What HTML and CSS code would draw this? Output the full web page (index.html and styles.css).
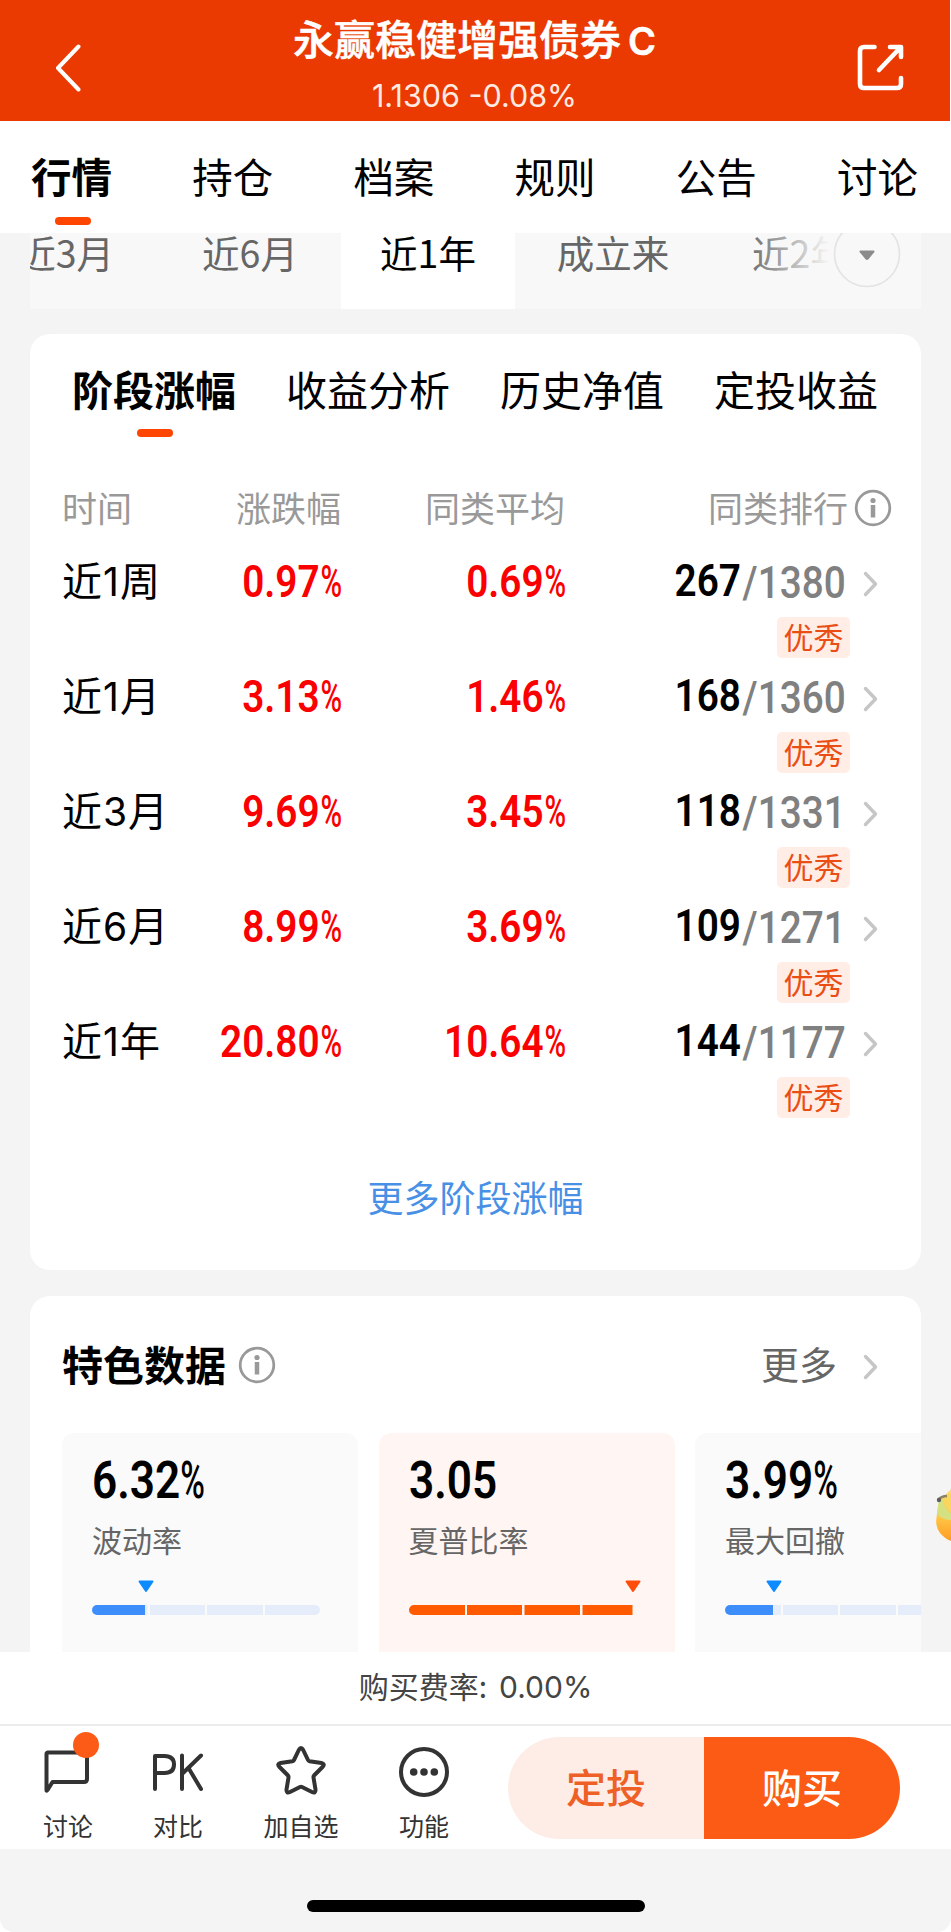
FILE: index.html
```html
<!DOCTYPE html>
<html lang="zh-CN">
<head>
<meta charset="utf-8">
<title>永赢稳健增强债券C</title>
<link rel="stylesheet" href="styles.css">
</head>
<body>
<svg class="defs" width="0" height="0">
  <symbol id="chev" viewBox="0 0 16 26"><path d="M2.500 2.500 L12.500 13 L2.500 23.500" fill="none" stroke="#c6c6c6" stroke-width="3.400" stroke-linecap="round" stroke-linejoin="round"/></symbol>
  <symbol id="info" viewBox="0 0 38 38"><circle cx="19" cy="19" r="16.800" fill="none" stroke="#999" stroke-width="2.800"/><circle cx="19" cy="11.500" r="2.600" fill="#999"/><path d="M19 16v12.500" stroke="#999" stroke-width="4.500"/></symbol>
</svg>
<div class="screen">
  <header class="header">
    <svg class="back" viewBox="0 0 28 48"><path d="M24.500 2.500 L4 24 L24.500 45.500" fill="none" stroke="#fff" stroke-width="4" stroke-linecap="round" stroke-linejoin="round"/></svg>
    <div class="heading">
      <h1 class="title">永赢稳健增强债券<span class="share-class">C</span></h1>
      <p class="quote">1.1306 -0.08%</p>
    </div>
    <svg class="share" viewBox="0 0 48 48"><g fill="none" stroke="#fff" stroke-width="4.600" stroke-linecap="round" stroke-linejoin="round"><path d="M17.500 3H7Q3 3 3 7V40Q3 44 7 44H40Q44 44 44 40V34"/><path d="M33 3H44V13M43 4L22 26"/></g></svg>
  </header>
  <nav class="tabs">
    <a class="tab active">行情</a><a class="tab">持仓</a><a class="tab">档案</a><a class="tab">规则</a><a class="tab">公告</a><a class="tab">讨论</a>
  </nav>
  <main class="content">
    <div class="periods">
      <span class="period first">近3月</span><span class="period second">近6月</span><span class="period on">近1年</span><span class="period fourth">成立来</span><span class="period last">近2年</span>
      <div class="fade"><svg class="drop" viewBox="0 0 68 68"><circle cx="34" cy="34" r="32.500" fill="#f8f8f8" stroke="#e3e3e3" stroke-width="1.600"/><path d="M27.500 31.500H40.500L34.700 38.500Q34 39.200 33.300 38.500Z" fill="#8b8b8b" stroke="#8b8b8b" stroke-width="2" stroke-linejoin="round"/></svg></div>
    </div>

    <section class="card performance">
      <div class="subtabs"><span class="subtab active">阶段涨幅</span><span class="subtab">收益分析</span><span class="subtab">历史净值</span><span class="subtab">定投收益</span></div>
      <div class="row head"><span>时间</span><span class="r">涨跌幅</span><span class="r">同类平均</span><span class="r rank-title">同类排行</span><svg class="info"><use href="#info"/></svg></div>
      <div class="row">
        <span class="label">近<i>1</i>周</span><b class="num">0.97<u>%</u></b><b class="num">0.69<u>%</u></b>
        <div class="rank"><span class="place"><b>267</b><em>/1380</em></span><span class="badge">优秀</span></div><svg class="chev"><use href="#chev"/></svg>
      </div>
      <div class="row">
        <span class="label">近<i>1</i>月</span><b class="num">3.13<u>%</u></b><b class="num">1.46<u>%</u></b>
        <div class="rank"><span class="place"><b>168</b><em>/1360</em></span><span class="badge">优秀</span></div><svg class="chev"><use href="#chev"/></svg>
      </div>
      <div class="row">
        <span class="label">近<i>3</i>月</span><b class="num">9.69<u>%</u></b><b class="num">3.45<u>%</u></b>
        <div class="rank"><span class="place"><b>118</b><em>/1331</em></span><span class="badge">优秀</span></div><svg class="chev"><use href="#chev"/></svg>
      </div>
      <div class="row">
        <span class="label">近<i>6</i>月</span><b class="num">8.99<u>%</u></b><b class="num">3.69<u>%</u></b>
        <div class="rank"><span class="place"><b>109</b><em>/1271</em></span><span class="badge">优秀</span></div><svg class="chev"><use href="#chev"/></svg>
      </div>
      <div class="row">
        <span class="label">近<i>1</i>年</span><b class="num">20.80<u>%</u></b><b class="num">10.64<u>%</u></b>
        <div class="rank"><span class="place"><b>144</b><em>/1177</em></span><span class="badge">优秀</span></div><svg class="chev"><use href="#chev"/></svg>
      </div>
      <a class="more-link">更多阶段涨幅</a>
    </section>

    <section class="card features">
      <div class="features-head"><h2>特色数据</h2><svg class="info"><use href="#info"/></svg><span class="more">更多</span><svg class="chev"><use href="#chev"/></svg></div>
      <div class="metrics">
        <div class="metric">
          <b class="value">6.32<u>%</u></b><span class="name">波动率</span>
          <svg class="gauge" viewBox="0 0 230 38"><path d="M47.500 1.500H60.500L54 11Z" fill="#0d8bff" stroke="#0d8bff" stroke-width="2" stroke-linejoin="round"/><path d="M53 25h2.500v10h-2.500zM58 25h55v10h-55zM115 25h56v10h-56zM173 25h50a5 5 0 0 1 0 10h-50z" fill="#e6edfa"/><path d="M5 25H53V35H5a5 5 0 0 1 0-10z" fill="#3d8dfb"/></svg>
        </div>
        <div class="metric hot">
          <b class="value">3.05</b><span class="name">夏普比率</span>
          <svg class="gauge" viewBox="0 0 230 38"><path d="M217.500 1.500H230.500L224 11Z" fill="#ff4d0a" stroke="#ff4d0a" stroke-width="2" stroke-linejoin="round"/><path d="M5 25H56V35H5a5 5 0 0 1 0-10zM58 25h55v10h-55zM115.500 25h55.500v10h-55.500zM173.500 25h50v10h-50z" fill="#ff5a00"/></svg>
        </div>
        <div class="metric">
          <b class="value">3.99<u>%</u></b><span class="name">最大回撤</span>
          <svg class="gauge" viewBox="0 0 230 38"><path d="M42.500 1.500H55.500L49 11Z" fill="#0d8bff" stroke="#0d8bff" stroke-width="2" stroke-linejoin="round"/><path d="M48 25h8v10h-8zM58 25h55v10h-55zM115 25h56v10h-56zM173 25h50a5 5 0 0 1 0 10h-50z" fill="#e6edfa"/><path d="M5 25H48V35H5a5 5 0 0 1 0-10z" fill="#3d8dfb"/></svg>
        </div>
      </div>
    </section>
    <svg class="mascot" viewBox="0 0 17 60"><defs><linearGradient id="honey" x1="0" y1="0" x2="0" y2="1"><stop offset="0" stop-color="#f8dc7a"/><stop offset=".55" stop-color="#ffc545"/><stop offset="1" stop-color="#ff9b24"/></linearGradient></defs><path d="M17 2Q13 7 6 12Q3 21 2.500 31Q1 39 6 46Q10 51 17 54Z" fill="url(#honey)"/><path d="M5 13L3 27Q9 33 17 33V26Q11 23 9 13Z" fill="#d5e181"/><path d="M10 12Q13 24 17 25V6Q13 7 10 12Z" fill="#fbd65c"/><path d="M4 13Q7 9 13 9" stroke="#8a8465" stroke-width="2.500" fill="none"/><circle cx="5" cy="13" r="2.200" fill="#605f59"/></svg>
  </main>
  <div class="fee">购买费率:<span>0.00%</span></div>
  <footer class="actions">
    <a class="tool talk"><svg viewBox="0 0 60 60"><path d="M9.500 17.500H46Q49 17.500 49 20.500V44Q49 47 46 47H14.500L9.500 55Q8.500 56.500 8.500 55V19Q8.500 17.500 10 17.500Z"/><circle class="dot" cx="48" cy="10" r="13"/></svg><span>讨论</span></a>
    <a class="tool pk"><svg viewBox="0 0 60 60"><path d="M7 54V21H16.500Q26 21 26 29.500Q26 38 16.500 38H7M34 20.500V54M53 20.500L34 39M40.500 33L53 54"/></svg><span>对比</span></a>
    <a class="tool star"><svg viewBox="0 0 60 60"><path d="M27.800 15Q30 11 32.200 15L37 25Q37.500 26 38.600 26.200L50.500 28Q54.500 29 51.500 32L43 40.500Q42.300 41.300 42.500 42.500L44.500 54.500Q44.700 58.800 41 57L31 52Q30 51.500 29 52L19 57Q15.300 58.800 15.500 54.500L17.500 42.500Q17.700 41.300 17 40.500L8.500 32Q5.500 29 9.500 28L21.400 26.200Q22.500 26 23 25Z"/></svg><span>加自选</span></a>
    <a class="tool func"><svg viewBox="0 0 60 60"><circle cx="30" cy="37" r="23"/><g class="fill"><circle cx="19.700" cy="37" r="3.800"/><circle cx="30" cy="37" r="3.800"/><circle cx="40.300" cy="37" r="3.800"/></g></svg><span>功能</span></a>
    <div class="buttons"><a class="plan">定投</a><a class="buy">购买</a></div>
  </footer>
  <div class="home"><div class="home-bar"></div></div>
</div>
</body>
</html>
```

FILE: styles.css
```css
* { box-sizing: border-box; }
body { margin: 0; background: #fff; font-family: "Noto Sans CJK SC", sans-serif; color: #000; }
h1, h2, p { margin: 0; }
i, em { font-style: normal; }
u { text-decoration: none; }
svg { display: block; flex: none; }
.defs { position: absolute; }
.screen { width: 951px; height: 1932px; display: flex; flex-direction: column; overflow: hidden; }

.header { height: 121px; margin-right: 1px; background: #ea3901; color: #fff; display: flex; align-items: flex-start; padding: 0 45px 0 54px; }
.back { width: 28px; height: 48px; margin-top: 44px; }
.heading { flex: 1; text-align: center; padding-left: 10px; }
.title { font-size: 41px; line-height: 60px; font-weight: 500; height: 76px; padding-top: 7px; white-space: nowrap; -webkit-text-stroke: .5px #fff; }
.share-class { font-family: Inter, sans-serif; font-weight: 600; font-size: 38px; margin-left: 7px; }
.quote { font: 400 30.500px/40px Inter, sans-serif; color: #ffeae2; }
.share { width: 48px; height: 48px; margin-top: 44px; }

.tabs { height: 112px; flex: none; display: flex; justify-content: space-between; padding: 0 33px 0 31px; }
.tab { font-size: 40.500px; line-height: 109px; position: relative; }
.tab.active { font-weight: 700; }
.tab.active::after, .subtab.active::after { content: ""; position: absolute; left: 50%; margin-left: -17px; width: 36px; height: 8px; border-radius: 4px; background: #ff4600; }
.tab.active::after { top: 96px; }

.content { height: 1419px; flex: none; background: #f4f4f4; padding: 0 30px; position: relative; overflow: hidden; }
.periods { height: 76px; background: #f8f8f8; display: flex; overflow: hidden; position: relative; font-size: 37.500px; line-height: 38px; color: #666; }
.period { text-align: center; flex: none; white-space: nowrap; }
.first { width: 137px; margin-left: -10px; padding-right: 43px; display: flex; justify-content: flex-end; }
.second { width: 184px; padding-left: 2px; }
.on { width: 174px; background: #fff; color: #000; }
.fourth { width: 197px; padding-right: 1px; }
.last { width: 150px; padding-left: 26px; }
.fade { position: absolute; right: 0; top: 0; width: 176px; height: 76px; background: linear-gradient(90deg, #f8f8f800, #f8f8f8 48%); }
.drop { width: 68px; height: 68px; margin: -13px 0 0 88px; }

.card { background: #fff; border-radius: 20px; }
.performance { margin-top: 25px; height: 936px; display: flex; flex-direction: column; }
.subtabs { height: 143px; display: flex; justify-content: space-between; padding: 0 43px 0 42px; }
.subtab { font-size: 41px; line-height: 109px; position: relative; }
.subtab.active { font-weight: 700; }
.subtab.active::after { top: 95px; }
.row { display: grid; grid-template-columns: 96px 184px 224px 285px 1fr; height: 115px; padding-left: 32px; line-height: 52px; }
.row.head { height: 78px; color: #999; font-size: 35px; line-height: 60px; }
.r { text-align: right; }
.row.head .r { padding-right: 1px; }
.row.head .rank-title { padding-right: 3px; }
.info { width: 38px; height: 38px; }
.row.head .info { margin: 12px 0 0 3px; }
.label { font-size: 40px; line-height: 49px; white-space: nowrap; }
.label i { font-family: Inter, sans-serif; font-size: 39px; margin: 0 1px; }
.num, .place b, .place em, .value { font-family: Roboto, sans-serif; font-weight: 600; display: inline-block; }
.num { font-size: 45px; line-height: 53px; color: #fa0000; text-align: right; transform: scaleX(.86); transform-origin: right; }
.num u, .value u { display: inline-block; transform: scaleX(.76); transform-origin: right; margin-left: -7px; font-weight: 500; }
.rank { display: flex; flex-direction: column; align-items: flex-end; padding-right: 1px; }
.place { height: 62px; padding-right: 5px; transform: scaleX(.86); transform-origin: right; white-space: nowrap; }
.place b { font-size: 45px; }
.place em { font-size: 45px; font-weight: 500; color: #808080; position: relative; top: 2px; margin-left: 2px; }
.badge { width: 73px; height: 41px; border-radius: 5px; background: #ffede6; color: #ea4e14; font-size: 30px; line-height: 38px; text-align: center; }
.chev { width: 16px; height: 26px; }
.row .chev { margin: 16px 0 0 12px; }
.more-link { margin-top: 40px; text-align: center; color: #4790e6; font-size: 36px; line-height: 52px; }

.features { margin-top: 26px; height: 420px; overflow: hidden; }
.features-head { height: 137px; display: flex; align-items: center; padding: 0 42px 0 32px; }
.features-head h2 { font-size: 41px; line-height: 60px; font-weight: 700; margin: -4px 12px 0 0; }
.features-head .more { margin: -4px 26px 0 auto; font-size: 38px; color: #666; }
.features-head .chev { margin-top: 5px; }
.metrics { display: flex; gap: 20.500px; padding-left: 32px; }
.metric { width: 296px; height: 240px; flex: none; background: #fafafa; border-radius: 12px; padding: 17px 0 0 30px; display: flex; flex-direction: column; align-items: flex-start; }
.metric.hot { background: #fff6f3; }
.value { font-size: 51px; line-height: 62px; transform: scaleX(.865); transform-origin: left; }
.value u { transform-origin: left; margin-left: 0; }
.name { font-size: 30px; line-height: 44px; color: #666; margin-top: 5px; }
.gauge { width: 230px; height: 38px; margin-top: 19px; overflow: visible; }
.mascot { position: absolute; right: 0; top: 1254px; width: 17px; height: 60px; }

.fee { height: 72px; flex: none; text-align: center; font-size: 30px; line-height: 67px; color: #444; }
.fee span { font-family: Inter, sans-serif; margin-left: 12px; }
.actions { height: 125px; flex: none; border-top: 2px solid #ececec; display: flex; padding-left: 38px; position: relative; }
.tool { width: 60px; display: flex; flex-direction: column; align-items: center; font-size: 25px; line-height: 36px; color: #333; white-space: nowrap; padding-top: 9px; }
.tool svg { width: 60px; height: 60px; overflow: visible; fill: none; stroke: #333; stroke-width: 4; stroke-linecap: round; stroke-linejoin: round; }
.tool span { margin-top: 12px; }
.tool .dot { fill: #fb5b16; stroke: none; }
.tool .fill { fill: #333; stroke: none; }
.pk { margin-left: 50px; }
.star { margin-left: 63px; }
.func { margin-left: 63px; }
.buttons { margin: 11px 0 0 54px; width: 392px; height: 102px; border-radius: 51px; overflow: hidden; display: flex; font-size: 40px; line-height: 99px; font-weight: 500; text-align: center; }
.buttons a { flex: 1; }
.plan { background: #fdede6; color: #ef6026; }
.buy { background: #fb5b14; color: #fff; }
.home { flex: 1; background: #f4f4f4; border-radius: 0 0 14px 14px; padding-top: 51px; }
.home-bar { width: 338px; height: 12px; border-radius: 6px; background: #000; margin: 0 auto; }
```
